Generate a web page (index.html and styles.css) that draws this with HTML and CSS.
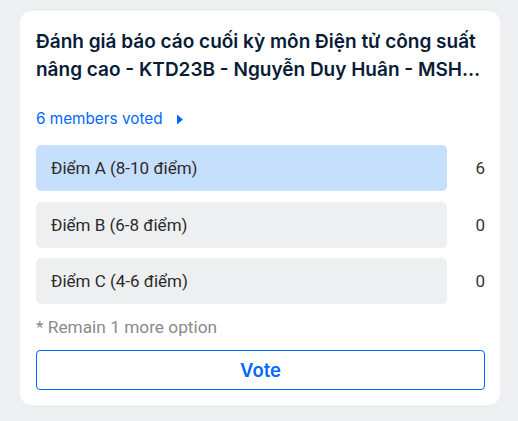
FILE: index.html
```html
<!DOCTYPE html>
<html lang="vi">
<head>
<meta charset="utf-8">
<link rel="stylesheet" href="styles.css">
</head>
<body>
<div class="card">
  <h2 class="title">Đánh giá báo cáo cuối kỳ môn Điện tử công suất nâng cao - KTD23B - Nguyễn Duy Huân - MSHV: 2370123</h2>
  <div class="voted">6 members voted
    <svg class="caret" width="8" height="11" viewBox="0 0 8 11"><path d="M1 0.5 L7 5.5 L1 10.5 Z" fill="#0068ff"/></svg>
  </div>
  <div class="options">
    <div class="option">
      <div class="bar selected">Điểm A (8-10 điểm)</div>
      <div class="count">6</div>
    </div>
    <div class="option">
      <div class="bar">Điểm B (6-8 điểm)</div>
      <div class="count">0</div>
    </div>
    <div class="option">
      <div class="bar">Điểm C (4-6 điểm)</div>
      <div class="count">0</div>
    </div>
  </div>
  <div class="remain">* Remain 1 more option</div>
  <button class="vote">Vote</button>
</div>
</body>
</html>
```
FILE: styles.css
```css
html, body {
  margin: 0;
  padding: 0;
}
body {
  background: #eef0f2;
  width: 518px;
  height: 421px;
  padding-top: 11px;
  padding-left: 20px;
  box-sizing: border-box;
}
.card {
  width: 480px;
  height: 394px;
  box-sizing: border-box;
  background: #ffffff;
  border-radius: 12px;
  padding: 17px 15px 0 16px;
}
.title {
  margin: 0;
  font-family: Inter, "Noto Sans", sans-serif;
  font-weight: 600;
  font-size: 19px;
  line-height: 28px;
  color: #081c36;
  display: -webkit-box;
  -webkit-line-clamp: 2;
  -webkit-box-orient: vertical;
  overflow: hidden;
}
.voted {
  margin-top: 25px;
  font-family: Inter, "Noto Sans", sans-serif;
  font-size: 15.3px;
  line-height: 20px;
  color: #0068ff;
  display: flex;
  align-items: center;
}
.caret {
  margin-left: 13px;
}
.options {
  margin-top: 16px;
  display: flex;
  flex-direction: column;
  gap: 10.5px;
}
.option {
  display: flex;
  align-items: center;
}
.bar {
  width: 411px;
  height: 46px;
  box-sizing: border-box;
  border-radius: 5px;
  background: #eeeff1;
  padding-left: 15px;
  display: flex;
  align-items: center;
  font-family: Roboto, "Noto Sans", sans-serif;
  font-size: 17px;
  color: #2b2b2b;
}
.bar.selected {
  background: #c6dffd;
}
.count {
  flex: 1;
  text-align: right;
  font-family: Roboto, "Noto Sans", sans-serif;
  font-size: 17px;
  color: #333;
}
.remain {
  margin-top: 13px;
  font-family: Roboto, "Noto Sans", sans-serif;
  font-size: 17.3px;
  line-height: 20px;
  color: #8a8a8a;
}
.vote {
  display: block;
  margin-top: 13px;
  width: 449px;
  height: 40px;
  box-sizing: border-box;
  background: #fff;
  border: 1px solid #0068ff;
  border-radius: 4px;
  font-family: Inter, "Noto Sans", sans-serif;
  font-weight: 600;
  font-size: 18.5px;
  color: #0068ff;
  padding: 0;
}
```
